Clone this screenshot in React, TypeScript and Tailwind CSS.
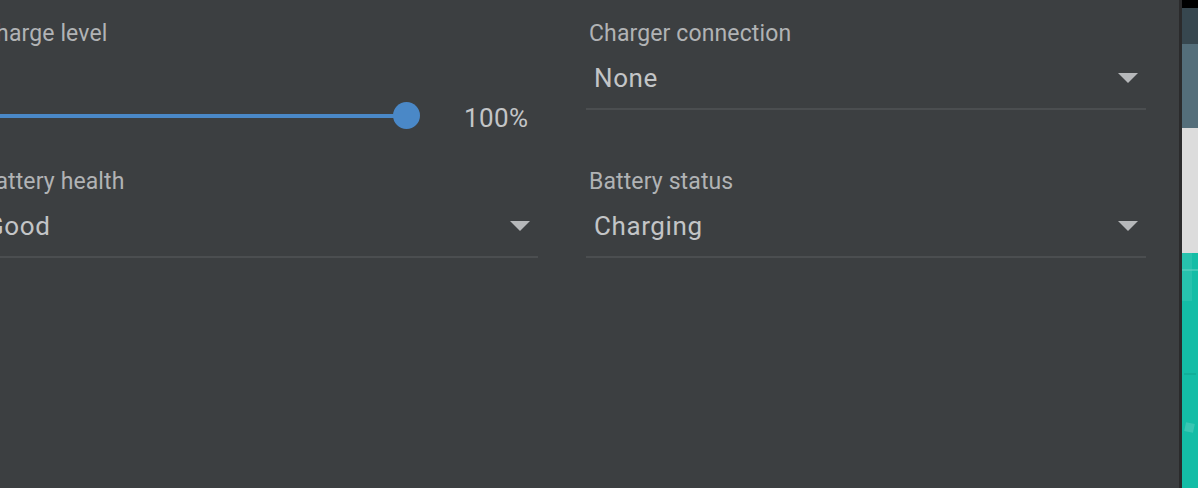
import { ReactNode } from 'react'

function Label({ children }: { children: ReactNode }) {
  return <div className="pl-[3px] text-[23px] leading-[28px] tracking-[0.12px] text-[#b1b3b5]">{children}</div>
}

function Caret() {
  return (
    <svg width="20" height="10" viewBox="0 0 20 10" className="shrink-0">
      <polygon points="0,0 20,0 10,10" fill="#b6b8ba" />
    </svg>
  )
}

function Dropdown({ value }: { value: string }) {
  return (
    <div className="mt-[14px]">
      <div className="flex h-[32px] items-center justify-between pl-[8px] pr-[8px]">
        <span className="text-[26px] leading-[32px] tracking-[0.6px] text-[#c3c5c7]">{value}</span>
        <Caret />
      </div>
      <div className="mt-[14px] h-[2px] bg-[#4b4e50]" />
    </div>
  )
}

function ChargeSlider({ percent }: { percent: number }) {
  return (
    <div className="mt-[52px] flex h-[32px] items-center">
      <div className="relative h-[32px] w-[442px]">
        <div className="absolute left-0 top-[14px] h-[4px] bg-[#4a88c7]" style={{ width: `${(percent / 100) * 428}px` }} />
        <div
          className="absolute top-[2px] h-[27px] w-[27px] rounded-full bg-[#4a88c7]"
          style={{ left: `${(percent / 100) * 428 - 13.5}px` }}
        />
      </div>
      <span className="ml-[44px] mt-[3px] text-[26px] leading-[32px] tracking-[0.4px] text-[#c3c5c7]">{percent}%</span>
    </div>
  )
}

function PhoneStrip() {
  return (
    <div className="flex w-[16px] flex-col">
      <div className="h-[8px] bg-black" />
      <div className="h-[36px] bg-[#37474f]" />
      <div className="h-[84px] bg-[#546e7a]" />
      <div className="h-[125px] bg-[#dcdcdc]" />
      <div className="relative flex-1 bg-[#14bda6]">
        <div className="absolute left-0 top-0 h-[48px] w-[10px] bg-[#2fc4b0] opacity-70" />
        <div className="absolute left-0 top-[16px] h-[2px] w-[16px] bg-[#5fd0c1] opacity-60" />
        <div className="absolute left-[2px] top-[120px] h-[2px] w-[12px] bg-[#0fa994] opacity-70" />
        <div className="absolute left-[3px] top-[170px] h-[9px] w-[9px] rotate-12 bg-[#49cbb9] opacity-70" />
      </div>
    </div>
  )
}

export default function App() {
  return (
    <div className="flex h-[488px] w-[1198px] overflow-hidden bg-[#3c3f41] font-['Roboto',sans-serif]">
      <div className="relative flex-1 overflow-hidden">
        <div className="ml-[-22px] grid w-[1168px] grid-cols-[560px_560px] gap-x-[48px] pt-[20px]">
          <div className="h-[148px]">
            <Label>Charge level</Label>
            <ChargeSlider percent={100} />
          </div>
          <div className="h-[148px]">
            <Label>Charger connection</Label>
            <Dropdown value="None" />
          </div>
          <div className="h-[148px]">
            <Label>Battery health</Label>
            <Dropdown value="Good" />
          </div>
          <div className="h-[148px]">
            <Label>Battery status</Label>
            <Dropdown value="Charging" />
          </div>
        </div>
      </div>
      <div className="w-[3px] bg-[#2b2b2c]" />
      <PhoneStrip />
    </div>
  )
}
